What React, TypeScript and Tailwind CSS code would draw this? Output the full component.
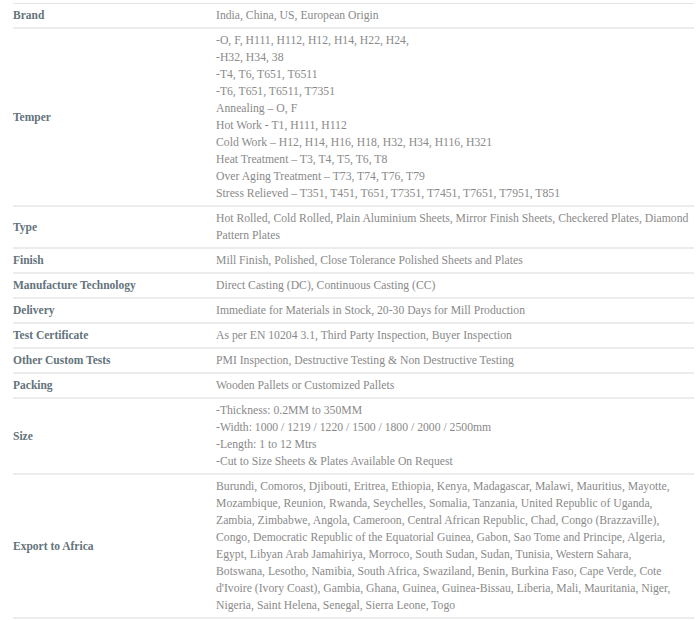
const rows: { label: string; lines: string[] }[] = [
  { label: 'Brand', lines: ['India, China, US, European Origin'] },
  {
    label: 'Temper',
    lines: [
      '-O, F, H111, H112, H12, H14, H22, H24,',
      '-H32, H34, 38',
      '-T4, T6, T651, T6511',
      '-T6, T651, T6511, T7351',
      'Annealing – O, F',
      'Hot Work - T1, H111, H112',
      'Cold Work – H12, H14, H16, H18, H32, H34, H116, H321',
      'Heat Treatment – T3, T4, T5, T6, T8',
      'Over Aging Treatment – T73, T74, T76, T79',
      'Stress Relieved – T351, T451, T651, T7351, T7451, T7651, T7951, T851',
    ],
  },
  {
    label: 'Type',
    lines: [
      'Hot Rolled, Cold Rolled, Plain Aluminium Sheets, Mirror Finish Sheets, Checkered Plates, Diamond Pattern Plates',
    ],
  },
  { label: 'Finish', lines: ['Mill Finish, Polished, Close Tolerance Polished Sheets and Plates'] },
  { label: 'Manufacture Technology', lines: ['Direct Casting (DC), Continuous Casting (CC)'] },
  { label: 'Delivery', lines: ['Immediate for Materials in Stock, 20-30 Days for Mill Production'] },
  { label: 'Test Certificate', lines: ['As per EN 10204 3.1, Third Party Inspection, Buyer Inspection'] },
  { label: 'Other Custom Tests', lines: ['PMI Inspection, Destructive Testing & Non Destructive Testing'] },
  { label: 'Packing', lines: ['Wooden Pallets or Customized Pallets'] },
  {
    label: 'Size',
    lines: [
      '-Thickness: 0.2MM to 350MM',
      '-Width: 1000 / 1219 / 1220 / 1500 / 1800 / 2000 / 2500mm',
      '-Length: 1 to 12 Mtrs',
      '-Cut to Size Sheets & Plates Available On Request',
    ],
  },
  {
    label: 'Export to Africa',
    // broken where the original page wraps
    lines: [
      'Burundi, Comoros, Djibouti, Eritrea, Ethiopia, Kenya, Madagascar, Malawi, Mauritius, Mayotte,',
      'Mozambique, Reunion, Rwanda, Seychelles, Somalia, Tanzania, United Republic of Uganda,',
      'Zambia, Zimbabwe, Angola, Cameroon, Central African Republic, Chad, Congo (Brazzaville),',
      'Congo, Democratic Republic of the Equatorial Guinea, Gabon, Sao Tome and Principe, Algeria,',
      'Egypt, Libyan Arab Jamahiriya, Morroco, South Sudan, Sudan, Tunisia, Western Sahara,',
      'Botswana, Lesotho, Namibia, South Africa, Swaziland, Benin, Burkina Faso, Cape Verde, Cote',
      "d'Ivoire (Ivory Coast), Gambia, Ghana, Guinea, Guinea-Bissau, Liberia, Mali, Mauritania, Niger,",
      'Nigeria, Saint Helena, Senegal, Sierra Leone, Togo',
    ],
  },
];

export default function App() {
  return (
    <div className="min-h-[620px] bg-white pt-[3px] pl-[13px] pr-[6px] font-['Liberation_Serif',serif]">
      <table className="w-full border-collapse border-t border-[#e4e4e4]">
        <tbody>
          {rows.map((row) => (
            <tr key={row.label} className="border-b-2 border-[#ececec]">
              <td className="w-[203px] p-0 py-[3px] align-middle text-[11.5px] leading-[17px] font-bold text-[#64737b]">
                {row.label}
              </td>
              <td className="p-0 py-[3px] align-middle text-[11.7px] leading-[17px] text-[#8a8a8a]">
                {row.lines.map((line, i) => (
                  <div key={i}>{line}</div>
                ))}
              </td>
            </tr>
          ))}
        </tbody>
      </table>
    </div>
  );
}
